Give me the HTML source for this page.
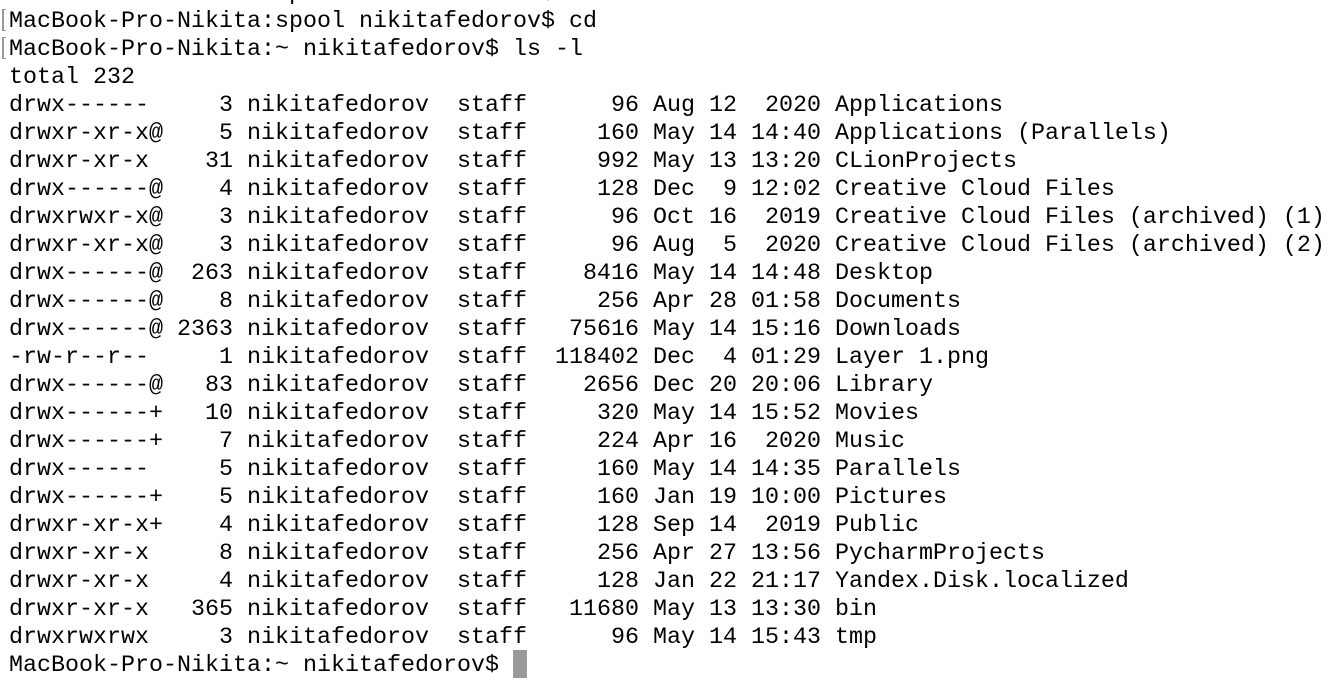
<!DOCTYPE html>
<html><head><style>
html,body{margin:0;padding:0;background:#fff;width:1332px;height:688px;overflow:hidden}
pre{position:absolute;left:9px;top:-20px;margin:0;font-family:"Liberation Mono",monospace;font-size:23.33px;line-height:28px;color:#000;letter-spacing:0}
.b{position:absolute;left:2px;height:20px;border-left:2px solid #999;border-top:1px solid #999;border-bottom:1px solid #999;width:2px}
.cur{display:inline-block;width:14px;height:28px;background:#999;vertical-align:top;position:relative;top:-2px}
</style></head><body>
<div class="b" style="top:9px"></div>
<div class="b" style="top:37px"></div>
<pre>MacBook-Pro-Nikita:spool nikitafedorov$ cd
MacBook-Pro-Nikita:spool nikitafedorov$ cd
MacBook-Pro-Nikita:~ nikitafedorov$ ls -l
total 232
drwx------     3 nikitafedorov  staff      96 Aug 12  2020 Applications
drwxr-xr-x@    5 nikitafedorov  staff     160 May 14 14:40 Applications (Parallels)
drwxr-xr-x    31 nikitafedorov  staff     992 May 13 13:20 CLionProjects
drwx------@    4 nikitafedorov  staff     128 Dec  9 12:02 Creative Cloud Files
drwxrwxr-x@    3 nikitafedorov  staff      96 Oct 16  2019 Creative Cloud Files (archived) (1)
drwxr-xr-x@    3 nikitafedorov  staff      96 Aug  5  2020 Creative Cloud Files (archived) (2)
drwx------@  263 nikitafedorov  staff    8416 May 14 14:48 Desktop
drwx------@    8 nikitafedorov  staff     256 Apr 28 01:58 Documents
drwx------@ 2363 nikitafedorov  staff   75616 May 14 15:16 Downloads
-rw-r--r--     1 nikitafedorov  staff  118402 Dec  4 01:29 Layer 1.png
drwx------@   83 nikitafedorov  staff    2656 Dec 20 20:06 Library
drwx------+   10 nikitafedorov  staff     320 May 14 15:52 Movies
drwx------+    7 nikitafedorov  staff     224 Apr 16  2020 Music
drwx------     5 nikitafedorov  staff     160 May 14 14:35 Parallels
drwx------+    5 nikitafedorov  staff     160 Jan 19 10:00 Pictures
drwxr-xr-x+    4 nikitafedorov  staff     128 Sep 14  2019 Public
drwxr-xr-x     8 nikitafedorov  staff     256 Apr 27 13:56 PycharmProjects
drwxr-xr-x     4 nikitafedorov  staff     128 Jan 22 21:17 Yandex.Disk.localized
drwxr-xr-x   365 nikitafedorov  staff   11680 May 13 13:30 bin
drwxrwxrwx     3 nikitafedorov  staff      96 May 14 15:43 tmp
MacBook-Pro-Nikita:~ nikitafedorov$ <span class="cur"></span></pre>
</body></html>
